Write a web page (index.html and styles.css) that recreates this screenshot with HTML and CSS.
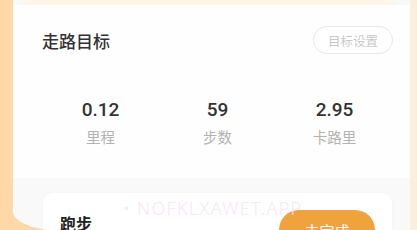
FILE: index.html
```html
<!DOCTYPE html>
<html lang="zh">
<head>
<meta charset="utf-8">
<link rel="stylesheet" href="styles.css">
</head>
<body>
<div class="page">
  <div class="strip-left"></div>
  <main class="sheet">
    <div class="top-band"></div>
    <section class="goal">
      <div class="goal-head">
        <h2 class="goal-title">走路目标</h2>
        <button class="goal-btn">目标设置</button>
      </div>
      <div class="stats">
        <div class="stat"><div class="stat-num">0.12</div><div class="stat-label">里程</div></div>
        <div class="stat"><div class="stat-num">59</div><div class="stat-label">步数</div></div>
        <div class="stat"><div class="stat-num">2.95</div><div class="stat-label">卡路里</div></div>
      </div>
    </section>
    <section class="task">
      <div class="task-name">跑步</div>
      <button class="task-btn">去完成</button>
    </section>
  </main>
  <div class="strip-right"></div>
</div>
<div class="watermark">• NOFKLXAWET.APP</div>
</body>
</html>
```
FILE: styles.css
```css
html, body {
  margin: 0;
  padding: 0;
}
body {
  width: 417px;
  height: 230px;
  overflow: hidden;
  position: relative;
  font-family: "Noto Sans CJK SC", "Noto Sans", sans-serif;
  background: #fed8a6;
}
.page {
  display: flex;
  height: 232px;
}
.strip-left {
  width: 13px;
  flex: none;
  background: #fed8a6;
}
.strip-right {
  width: 7px;
  flex: none;
  background: #fdeedc;
}
.sheet {
  flex: 1;
  background: #f9f9f9;
  border-bottom-left-radius: 60px 20px;
  display: flex;
  flex-direction: column;
  overflow: hidden;
}
.top-band {
  flex: none;
  height: 5px;
  margin: 0 18px 0 12px;
  background: #fff6ea;
  box-shadow: 0 2px 6px rgba(250, 225, 190, 0.5);
}
.goal {
  flex: none;
  background: #fefefe;
  padding: 21px 17px 0 29px;
  height: 173px;
  box-sizing: border-box;
}
.goal-head {
  display: flex;
  align-items: center;
  justify-content: space-between;
  height: 28px;
}
.goal-title {
  margin: 0;
  font-size: 17px;
  font-weight: 500;
  color: #333;
}
.goal-btn {
  width: 80px;
  height: 28px;
  border: 1px solid #e8e8e8;
  border-radius: 14px;
  background: #fff;
  color: #c9c9c9;
  font-family: inherit;
  font-size: 12.5px;
  padding: 0;
}
.stats {
  display: grid;
  grid-template-columns: repeat(3, 1fr);
  margin-top: 45px;
  width: 351px;
}
.stat {
  display: flex;
  flex-direction: column;
  align-items: center;
}
.stat-num {
  font-family: Roboto, "Noto Sans", sans-serif;
  font-weight: 500;
  font-size: 19px;
  line-height: 22px;
  color: #333;
}
.stat-label {
  margin-top: 6px;
  font-size: 14.5px;
  line-height: 20px;
  color: #b3b3b3;
}
.task {
  flex: none;
  margin: 15px 18px 0 30px;
  background: #fff;
  border-radius: 10px;
  box-shadow: 0 0 6px rgba(0, 0, 0, 0.025);
  display: flex;
  justify-content: space-between;
  align-items: flex-start;
  padding: 17px 17px 0 17px;
  height: 60px;
}
.task-name {
  font-size: 16px;
  font-weight: 700;
  color: #222;
  line-height: 20px;
  margin-top: 3px;
}
.task-btn {
  width: 96px;
  height: 40px;
  border: none;
  border-radius: 20px;
  background: #f0a23c;
  color: #fff;
  font-family: inherit;
  font-size: 15px;
  padding: 0;
}
.watermark {
  position: absolute;
  left: 123px;
  top: 196px;
  font-family: "Noto Sans", sans-serif;
  font-weight: 300;
  font-size: 18px;
  color: #fde4f6;
  letter-spacing: 1.3px;
  white-space: nowrap;
}
```
